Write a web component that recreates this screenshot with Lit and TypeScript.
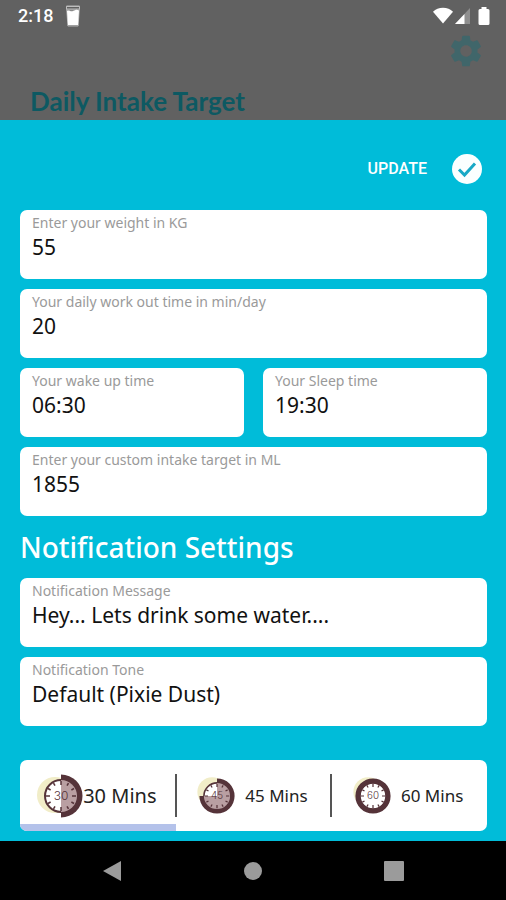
import { LitElement, html, svg, css } from "lit";
import { customElement, property, state } from "lit/decorators.js";

const INK = "#553339";

@customElement("status-bar")
class StatusBar extends LitElement {
  static styles = css`
    :host {
      display: flex;
      align-items: center;
      height: 32px;
      padding: 0 16px 0 18px;
      color: #fff;
      font: 500 18px/32px Roboto, "Noto Sans", sans-serif;
    }
    svg {
      display: block;
    }
    .glass {
      margin-left: 12px;
    }
    .wifi {
      margin-left: auto;
    }
    .signal {
      margin-left: 2px;
    }
    .battery {
      margin-left: 8px;
    }
  `;

  render() {
    return html`
      <span>2:18</span>
      <svg class="glass" width="16" height="22" viewBox="0 0 16 22" aria-hidden="true">
        <path d="M1.500 1h13l-1.400 20H2.900z" fill="#8a8a8a" stroke="#b5b5b5" />
        <path d="M1.500 1.500h13v2.500h-13z" fill="#606060" stroke="#bdbdbd" />
        <path d="M2 6c2-1.600 3.600 1 6 0s3.600-2 6-.6L13 20H3z" fill="#fff" />
      </svg>
      <svg class="wifi" width="20" height="18" viewBox="0 0 20 18" aria-hidden="true">
        <path d="M0 4.800C2.600 2.200 6 .8 10 .8s7.400 1.400 10 4L10 16.500z" fill="#fff" />
      </svg>
      <svg class="signal" width="15" height="16" viewBox="0 0 15 16" aria-hidden="true">
        <path d="M15 0v16H0z" fill="#8f8f8f" />
        <path d="M9.500 5.900V16H0z" fill="#fff" />
      </svg>
      <svg class="battery" width="12" height="18" viewBox="0 0 12 18" aria-hidden="true">
        <path d="M3.500 0h5v2H10a1.500 1.500 0 0 1 1.500 1.500v13A1.500 1.500 0 0 1 10 18H2A1.500 1.500 0 0 1 .5 16.500v-13A1.500 1.500 0 0 1 2 2h1.500z" fill="#fff" />
      </svg>
    `;
  }
}

@customElement("field-card")
class FieldCard extends LitElement {
  @property() label = "";
  @property() value = "";
  @property({ type: Boolean }) choice = false;

  static styles = css`
    :host {
      display: block;
      min-width: 0;
    }
    .card {
      display: flex;
      flex-direction: column;
      box-sizing: border-box;
      height: 69px;
      padding: 4px 12px;
      border-radius: 7px;
      background: #fff;
    }
    .label {
      color: #9a9a9a;
      font-size: 14px;
      line-height: 17px;
    }
    .control {
      box-sizing: border-box;
      width: 100%;
      height: 32px;
      margin: 0;
      padding: 0;
      border: 0;
      outline: 0;
      appearance: none;
      background: none;
      color: #111;
      font: inherit;
      font-size: 21px;
      line-height: 32px;
    }
  `;

  render() {
    return html`
      <div class="card">
        <label class="label" for="control">${this.label}</label>
        ${this.choice
          ? html`<select class="control" id="control">
              <option>${this.value}</option>
            </select>`
          : html`<input class="control" id="control" type="text" .value=${this.value} />`}
      </div>
    `;
  }
}

@customElement("interval-clock")
class IntervalClock extends LitElement {
  @property({ type: Number }) minutes = 30;
  @property({ type: Number }) size = 44;

  static styles = css`
    :host {
      display: block;
    }
    svg {
      display: block;
    }
    .digits {
      font: 300 12px Inter, "Noto Sans", sans-serif;
    }
  `;

  private sweep() {
    if (this.minutes >= 60) {
      return svg`<circle cx="24" cy="22" r="18.500" fill="none" stroke=${INK} stroke-width="6" />`;
    }
    const half = this.minutes === 30;
    const sector = half
      ? "M24 .5a21.500 21.500 0 0 1 0 43z"
      : "M24 .5a21.500 21.500 0 1 1-21.500 21.500H24z";
    const face = half
      ? "M24 6a16 16 0 0 1 0 32z"
      : "M24 6a16 16 0 1 1-16 16H24z";
    return svg`
      <path d=${sector} fill=${INK} />
      <path d=${face} fill="#b99fa2" />
    `;
  }

  render() {
    const ticks = Array.from({ length: 12 }, (_, i) => i * 30);
    const glow = this.minutes === 30 ? { x: 18, y: 21 } : { x: 18, y: 17 };
    return html`
      <svg width=${this.size} height=${this.size} viewBox="2 0 44 44" overflow="visible" aria-hidden="true">
        <circle cx=${glow.x} cy=${glow.y} r="18" fill="#f1edc8" />
        <circle cx="24" cy="22" r="16" fill="#fff" stroke=${INK} stroke-width="2" />
        ${this.sweep()}
        ${ticks.map(
          (a) => svg`<path d=${a % 90 ? "M24 7v3" : "M24 7v4"} stroke=${INK} stroke-width="1.500" transform="rotate(${a} 24 22)" />`
        )}
        <text class="digits" x="24" y="26" text-anchor="middle" fill=${INK}>${this.minutes}</text>
      </svg>
    `;
  }
}

@customElement("app-root")
class AppRoot extends LitElement {
  @state() private interval = 30;

  static styles = css`
    :host {
      display: flex;
      flex-direction: column;
      min-height: 100vh;
      background: #00bcd9;
      font-family: "Noto Sans", "Open Sans", sans-serif;
    }
    button {
      padding: 0;
      border: 0;
      background: none;
      cursor: pointer;
    }
    svg {
      display: block;
    }
    .behind {
      display: flex;
      flex-direction: column;
      height: 120px;
      background: #616161;
    }
    .tools {
      display: flex;
      justify-content: flex-end;
      padding: 3px 24px 0;
    }
    .title {
      margin: 19px 30px 0;
      color: #0d5962;
      font: 700 26px/30px Lato, "Noto Sans", sans-serif;
    }
    .sheet {
      display: flex;
      flex: 1;
      flex-direction: column;
      gap: 10px;
      padding: 34px 19px 10px 20px;
    }
    .update {
      display: flex;
      align-items: center;
      align-self: flex-end;
      gap: 25px;
      margin: 0 5px 16px 0;
      color: #fff;
      font: 500 16px/30px Roboto, "Liberation Sans", sans-serif;
    }
    .pair {
      display: grid;
      grid-template-columns: 1fr 1fr;
      gap: 19px;
    }
    .heading {
      margin: 0;
      color: #fff;
      font-size: 28px;
      font-weight: 500;
      line-height: 42px;
    }
    .intervals {
      display: grid;
      grid-template-columns: repeat(3, 1fr);
      height: 71px;
      margin: auto 0 0;
      padding: 0;
      overflow: hidden;
      border: 0;
      border-radius: 7px;
      background: #fff;
    }
    .option {
      position: relative;
      display: flex;
      align-items: center;
      justify-content: center;
      gap: 10px;
      color: #222;
      font-size: 17px;
      cursor: pointer;
    }
    .option + .option::before {
      content: "";
      position: absolute;
      left: -1px;
      top: 14px;
      bottom: 14px;
      width: 2px;
      background: #555;
    }
    .option:has(:checked) {
      gap: 0;
      font-size: 20px;
      box-shadow: inset 0 -7px #b4c2ea;
    }
    .radio {
      position: absolute;
      inset: 0;
      margin: 0;
      opacity: 0;
      cursor: pointer;
    }
    .nav {
      display: flex;
      align-items: center;
      justify-content: space-around;
      height: 59px;
      padding: 0 42px;
      background: #000;
    }
  `;

  render() {
    return html`
      <header class="behind">
        <status-bar></status-bar>
        <div class="tools">
          <button aria-label="Settings">
            <svg width="32" height="32" viewBox="2 2 20 20">
              <path
                fill="#40666a"
                d="M19.140 12.940c.040-.300.060-.610.060-.940 0-.320-.020-.640-.070-.940l2.030-1.580a.49.49 0 0 0 .120-.610l-1.920-3.320a.488.488 0 0 0-.590-.220l-2.390.960c-.500-.380-1.030-.700-1.620-.940l-.360-2.540a.484.484 0 0 0-.480-.410h-3.840c-.240 0-.430.170-.470.410l-.360 2.540c-.590.240-1.130.570-1.620.940l-2.390-.960c-.220-.080-.470 0-.590.220L2.740 8.870c-.120.210-.080.470.120.610l2.030 1.580c-.050.300-.090.630-.090.940s.020.640.070.940l-2.030 1.580a.49.49 0 0 0-.120.610l1.920 3.320c.120.220.370.290.590.220l2.390-.960c.500.380 1.030.700 1.620.940l.360 2.540c.050.240.240.410.480.410h3.840c.240 0 .440-.170.470-.410l.360-2.540c.590-.240 1.130-.560 1.620-.940l2.390.960c.220.080.470 0 .590-.220l1.920-3.320c.120-.220.070-.470-.120-.610zM12 15.600A3.610 3.610 0 0 1 8.400 12c0-1.980 1.620-3.600 3.600-3.600s3.600 1.620 3.600 3.600-1.620 3.600-3.600 3.600z"
              />
            </svg>
          </button>
        </div>
        <h1 class="title">Daily Intake Target</h1>
      </header>

      <main class="sheet">
        <button class="update">
          UPDATE
          <svg width="30" height="30" viewBox="0 0 30 30" aria-hidden="true">
            <circle cx="15" cy="15" r="15" fill="#fbffff" />
            <path d="M7 15.500l5.500 5.500L23 9.500" fill="none" stroke="#18a9c6" stroke-width="3" />
          </svg>
        </button>
        <field-card label="Enter your weight in KG" value="55"></field-card>
        <field-card label="Your daily work out time in min/day" value="20"></field-card>
        <div class="pair">
          <field-card label="Your wake up time" value="06:30"></field-card>
          <field-card label="Your Sleep time" value="19:30"></field-card>
        </div>
        <field-card label="Enter your custom intake target in ML" value="1855"></field-card>
        <h2 class="heading">Notification Settings</h2>
        <field-card label="Notification Message" value="Hey... Lets drink some water...."></field-card>
        <field-card label="Notification Tone" value="Default (Pixie Dust)" choice></field-card>

        <fieldset class="intervals" aria-label="Reminder interval">
          ${[30, 45, 60].map(
            (m) => html`
              <label class="option">
                <input
                  class="radio"
                  type="radio"
                  name="interval"
                  .value=${String(m)}
                  ?checked=${m === this.interval}
                  @change=${() => (this.interval = m)}
                />
                <interval-clock .minutes=${m} .size=${m === this.interval ? 44 : 36}></interval-clock>
                <span>${m} Mins</span>
              </label>
            `
          )}
        </fieldset>
      </main>

      <nav class="nav" aria-label="System">
        <button aria-label="Back">
          <svg width="20" height="22" viewBox="0 0 20 22"><path d="M1 11L19 1v20z" fill="#9b9b9b" /></svg>
        </button>
        <button aria-label="Home">
          <svg width="20" height="20" viewBox="0 0 20 20"><circle cx="10" cy="10" r="9" fill="#9b9b9b" /></svg>
        </button>
        <button aria-label="Recent apps">
          <svg width="20" height="20" viewBox="0 0 20 20"><rect width="20" height="20" rx="1" fill="#9b9b9b" /></svg>
        </button>
      </nav>
    `;
  }
}
